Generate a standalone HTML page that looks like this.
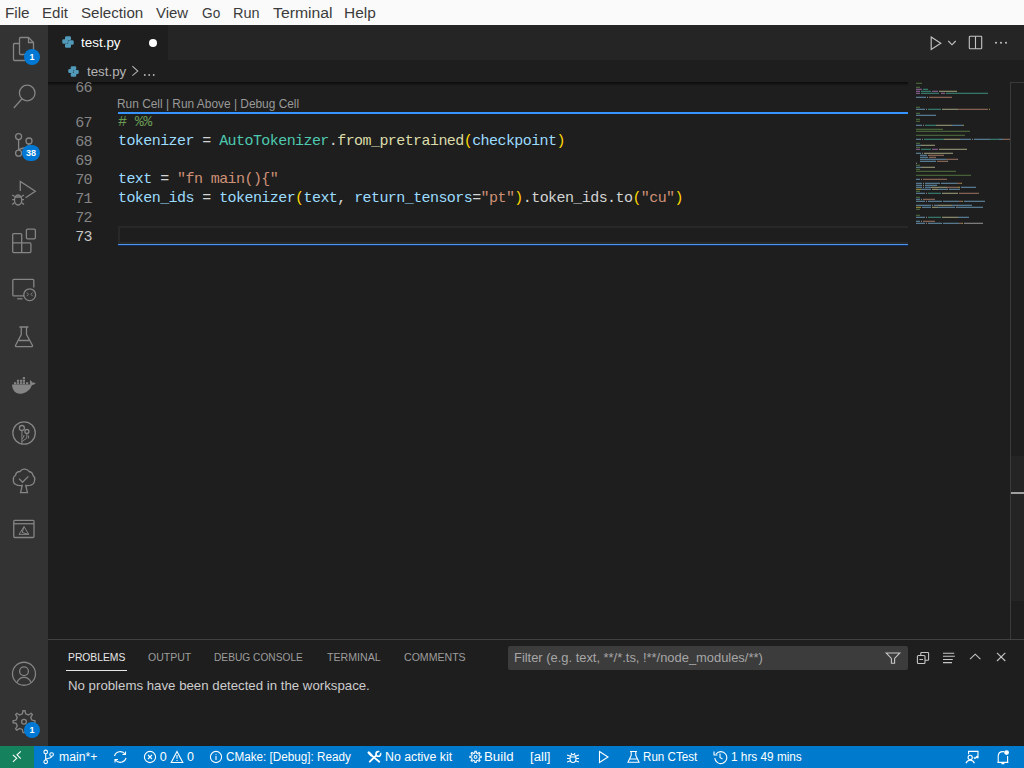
<!DOCTYPE html>
<html><head><meta charset="utf-8">
<style>
*{margin:0;padding:0;box-sizing:border-box}
html,body{width:1024px;height:768px;overflow:hidden;background:#1e1e1e;font-family:"Liberation Sans",sans-serif}
.a{position:absolute;white-space:nowrap}
svg.a{overflow:visible}
#menubar{left:0;top:0;width:1024px;height:25px;background:#fafafa;color:#3c3c3c;font-size:14px}
#menubar span{position:absolute;top:5px;line-height:17px}
#activity{left:0;top:25px;width:48px;height:721px;background:#333333}
#tabs{left:48px;top:25px;width:976px;height:35px;background:#252526}
#tab1{left:48px;top:25px;width:120px;height:35px;background:#1e1e1e}
#crumbs{left:48px;top:60px;width:976px;height:22px;background:#1e1e1e}
#editor{left:48px;top:82px;width:976px;height:557px;background:#1e1e1e}
#panel{left:48px;top:639px;width:976px;height:107px;background:#1e1e1e;border-top:1px solid #414141}
#status{left:0;top:746px;width:1024px;height:22px;background:#007acc;color:#fff;font-size:12px}
#remote{left:0;top:746px;width:34px;height:22px;background:#16825d}
.code{font-family:"Liberation Mono",monospace;font-size:15px;letter-spacing:-0.57px;line-height:19px;color:#d4d4d4}
.ln{color:#858585;text-align:right;width:50px;left:42px}
.v{color:#9cdcfe}.c{color:#4ec9b0}.f{color:#dcdcaa}.s{color:#ce9178}.m{color:#6a9955}.b{color:#ffd700}
.ic{stroke:#858585;fill:none;stroke-width:1.3}
.badge{background:#0078d4;color:#fff;font-size:9px;font-weight:bold;text-align:center;border-radius:8px;line-height:16px;height:16px}
.st{color:#fff;font-size:12px;top:749px;line-height:16px}
.si{stroke:#fff;fill:none;stroke-width:1.1}
.ptab{color:#9d9d9d;font-size:11px;top:651px;line-height:13px}
</style></head><body>
<div id="menubar" class="a"></div>
<div class="a" style="left:5.49px;top:5px;font-size:14px;line-height:17px;color:#3c3c3c;transform:scaleX(1.0905);transform-origin:0 0">File</div> <div class="a" style="left:42.17px;top:5px;font-size:14px;line-height:17px;color:#3c3c3c;transform:scaleX(1.0750);transform-origin:0 0">Edit</div> <div class="a" style="left:80.75px;top:5px;font-size:14px;line-height:17px;color:#3c3c3c;transform:scaleX(1.0807);transform-origin:0 0">Selection</div> <div class="a" style="left:156.00px;top:5px;font-size:14px;line-height:17px;color:#3c3c3c;transform:scaleX(1.0645);transform-origin:0 0">View</div> <div class="a" style="left:202.41px;top:5px;font-size:14px;line-height:17px;color:#3c3c3c;transform:scaleX(0.9778);transform-origin:0 0">Go</div> <div class="a" style="left:232.78px;top:5px;font-size:14px;line-height:17px;color:#3c3c3c;transform:scaleX(1.0360);transform-origin:0 0">Run</div> <div class="a" style="left:273.00px;top:5px;font-size:14px;line-height:17px;color:#3c3c3c;transform:scaleX(1.1269);transform-origin:0 0">Terminal</div> <div class="a" style="left:343.53px;top:5px;font-size:14px;line-height:17px;color:#3c3c3c;transform:scaleX(1.1036);transform-origin:0 0">Help</div>
<div id="activity" class="a"></div>
<div id="tabs" class="a"></div>
<div id="tab1" class="a"></div>
<div id="crumbs" class="a"></div>
<div id="editor" class="a"></div>
<div id="panel" class="a"></div>
<div id="status" class="a"></div>
<div id="remote" class="a"></div>

<!-- activity bar icons -->
<svg class="a" style="left:0;top:25px" width="48" height="721">
 <g class="ic">
  <!-- files -->
  <path d="M19.5 18.5 H14.5 Q13.5 18.5 13.5 19.5 V34.5 Q13.5 35.5 14.5 35.5 H25"/>
  <path d="M20.5 12.5 H28.5 L33.5 17.5 V29.5 M25 29.5 H20.5 Q19.5 29.5 19.5 28.5 V13.5 Q19.5 12.5 20.5 12.5 M28.5 12.5 V17.5 H33.5"/>
  <!-- search -->
  <circle cx="27.2" cy="68" r="7.8"/>
  <path d="M21.8 74 L13.8 83"/>
  <!-- source control -->
  <circle cx="18.6" cy="111.6" r="3"/>
  <circle cx="29" cy="116" r="3"/>
  <circle cx="18.6" cy="128.2" r="3"/>
  <path d="M18.6 114.6 V125.2 M29 119 Q29 122 24 123 Q19 124 18.6 125.2"/>
  <!-- debug -->
  <path d="M20.3 166 V156.5 L35.3 166.2 L25.6 172.7"/>
  <ellipse cx="18.1" cy="175" rx="3.6" ry="5"/>
  <path d="M15 172 H21.3 M12.2 170 L14.7 171.5 M24 170 L21.5 171.5 M12.2 174.7 H14.5 M21.7 174.7 H24 M12.2 179.5 L14.7 177.5 M24 179.5 L21.5 177.5"/>
  <!-- extensions -->
  <path d="M21.25 208.6 H13.7 Q12.7 208.6 12.7 209.6 V226.6 Q12.7 227.6 13.7 227.6 H29.9 Q30.9 227.6 30.9 226.6 V218.9 Q30.9 217.9 29.9 217.9 H21.7 V209.6 Q21.7 208.6 20.7 208.6 M12.7 217.9 H21.7 V227.6"/>
  <rect x="26.4" y="204.2" width="9" height="9.7" rx="1.3"/>
  <!-- remote explorer -->
  <path d="M24 270.9 H13.8 Q12.8 270.9 12.8 269.9 V255.4 Q12.8 254.4 13.8 254.4 H32.8 Q33.8 254.4 33.8 255.4 V262.5"/>
  <path d="M17.2 273.8 H22.5"/>
  <circle cx="29.7" cy="269.7" r="5.9"/>
  <path d="M26.8 267.5 L28.5 269.3 L26.8 271.1 M32.6 267.5 L30.9 269.3 L32.6 271.1" stroke-width="0.9"/>
  <!-- beaker -->
  <path d="M19.4 302 H28.4 M21.25 302 V309.6 L15.5 320.5 Q15.3 321.7 16.5 321.7 H31.6 Q32.8 321.7 32.5 320.5 L26.5 309.6 V302 M19 315.5 H28.75"/>
  <!-- gitlens -->
  <circle cx="24.06" cy="408" r="11.2"/>
  <circle cx="21.9" cy="403" r="2.5"/>
  <circle cx="26.9" cy="406.5" r="2"/>
  <path d="M21.9 405.5 V419 M26.9 408.5 V412 Q26.9 414 24 415 Q22 416 21.9 417 M24 410 Q24 413 22 414 M28.6 410.5 V413.5" stroke-width="1"/>
  <!-- tree -->
  <path d="M22.2 460.5 Q18 461 16 459.5 Q13 458.5 13.4 455 Q13 451.5 15.5 450.5 Q16 446.5 20 446.5 Q22 443.8 24.5 444.2 Q27.5 444 29 446.5 Q32.5 447 33 450.5 Q35.5 452.5 34.6 455.5 Q34 459.5 31 460 Q28.5 461 25.8 460.5 L27.4 467.6 H20.6 Z"/>
  <path d="M19 453.6 L22.5 457.3 L28.4 451.4"/>
  <!-- cmake -->
  <rect x="13.75" y="495.3" width="20.25" height="17.2" rx="1"/>
  <path d="M13.75 498.75 H34"/>
  <path d="M24 501.6 L19 509.4 H28.75 Z M24 501.6 L22.2 507.5 L28.75 509.4" stroke-width="1"/>
  <!-- account -->
  <circle cx="24" cy="648.75" r="11.5"/>
  <circle cx="24" cy="646.2" r="4.4"/>
  <path d="M16.9 657.5 Q19 652.3 24 652.3 Q29 652.3 31.1 657.5"/>
  <!-- gear -->
  <circle cx="24" cy="696.7" r="2.4"/>
 </g>
 <path class="ic" d="M22.32 688.88 L23.05 685.74 L24.95 685.74 L25.68 688.88 L28.34 689.98 L31.08 688.28 L32.42 689.62 L30.72 692.36 L31.82 695.02 L34.96 695.75 L34.96 697.65 L31.82 698.38 L30.72 701.04 L32.42 703.78 L31.08 705.12 L28.34 703.42 L25.68 704.52 L24.95 707.66 L23.05 707.66 L22.32 704.52 L19.66 703.42 L16.92 705.12 L15.58 703.78 L17.28 701.04 L16.18 698.38 L13.04 697.65 L13.04 695.75 L16.18 695.02 L17.28 692.36 L15.58 689.62 L16.92 688.28 L19.66 689.98 Z"/>
 <!-- docker (filled) -->
 <g fill="#858585">
  <path d="M12 359.6 H30.2 Q29.6 357.2 30 355 Q31.8 356 32.4 357.6 Q34.2 357.4 35.8 358.3 Q34.4 360 31.8 360.2 Q30.2 366.2 22.5 368.6 Q16 369.8 13.2 364.5 Q12 362.5 12 359.6 Z"/>
  <rect x="14" y="357.25" width="2.2" height="2.1"/><rect x="16.9" y="357.25" width="2.2" height="2.1"/><rect x="20" y="357.25" width="2.2" height="2.1"/><rect x="22.8" y="357.25" width="2.2" height="2.1"/><rect x="26" y="357.25" width="2.2" height="2.1"/>
  <rect x="16.9" y="354.75" width="2.2" height="2.1"/><rect x="20" y="354.75" width="2.2" height="2.1"/><rect x="22.8" y="354.75" width="2.2" height="2.1"/>
  <rect x="22.8" y="352.1" width="2.2" height="2.1"/>
 </g>
</svg>
<div class="a badge" style="left:24px;top:48.6px;width:16px">1</div>
<div class="a badge" style="left:22px;top:144.5px;width:18px">38</div>
<div class="a badge" style="left:24px;top:722px;width:16px">1</div>

<!-- tab -->
<svg class="a" style="left:62px;top:36px" width="12" height="12" viewBox="0 0 12 12"><g fill="#519aba"><rect x="3" y="0.3" width="6" height="4" rx="1.3"/><rect x="0.3" y="3.3" width="5.6" height="4.4" rx="1.3"/><rect x="3" y="3" width="2.9" height="1.3"/><rect x="6.1" y="4.3" width="5.6" height="4.4" rx="1.3"/><rect x="3" y="7.7" width="6" height="4" rx="1.3"/><rect x="6.1" y="7.7" width="2.9" height="1.3"/></g></svg>
<div class="a" style="left:80.61px;top:34px;font-size:13px;line-height:17px;color:#ffffff;transform:scaleX(1.0333);transform-origin:0 0">test.py</div>
<div class="a" style="left:149px;top:39px;width:8px;height:8px;border-radius:4px;background:#fff"></div>
<!-- editor actions -->
<svg class="a" style="left:920px;top:30px" width="100" height="25">
 <g stroke="#c5c5c5" fill="none" stroke-width="1.1">
  <path d="M11.2 7 L20.8 13.2 L11.2 19.5 Z"/>
  <path d="M28.3 11 L32 14.8 L35.7 11"/>
  <rect x="49.3" y="6.3" width="12.4" height="12.4" rx="0.8"/>
  <path d="M55.5 6.3 V18.7"/>
 </g>
 <g fill="#c5c5c5"><circle cx="76" cy="12.8" r="1"/><circle cx="81" cy="12.8" r="1"/><circle cx="86" cy="12.8" r="1"/></g>
</svg>
<!-- breadcrumbs -->
<svg class="a" style="left:68px;top:65.5px" width="11" height="11" viewBox="0 0 12 12"><g fill="#519aba"><rect x="3" y="0.3" width="6" height="4" rx="1.3"/><rect x="0.3" y="3.3" width="5.6" height="4.4" rx="1.3"/><rect x="3" y="3" width="2.9" height="1.3"/><rect x="6.1" y="4.3" width="5.6" height="4.4" rx="1.3"/><rect x="3" y="7.7" width="6" height="4" rx="1.3"/><rect x="6.1" y="7.7" width="2.9" height="1.3"/></g></svg>
<div class="a" style="left:86.81px;top:63px;font-size:13px;line-height:17px;color:#b4b4b4;transform:scaleX(1.0256);transform-origin:0 0">test.py</div>
<svg class="a" style="left:130px;top:64px" width="30" height="16">
 <path d="M2.35 2.1 L7.8 7.05 L2.35 11.7" stroke="#b4b4b4" fill="none" stroke-width="1.1"/>
 <g fill="#b4b4b4"><circle cx="14.8" cy="11" r="0.95"/><circle cx="19.2" cy="11" r="0.95"/><circle cx="23.7" cy="11" r="0.95"/></g>
</svg>
<!-- scroll shadow -->
<div class="a" style="left:48px;top:82px;width:860px;height:4px;background:linear-gradient(#000000a0,#0000)"></div>

<!-- code -->
<div class="a code ln" style="top:79px">66</div>
<div class="a" style="left:117.01px;top:97px;font-size:12px;line-height:15px;color:#999999;transform:scaleX(0.9918);transform-origin:0 0">Run Cell | Run Above | Debug Cell</div>
<div class="a" style="left:118px;top:112px;width:790px;height:2px;background:#3794ff"></div>
<div class="a code ln" style="top:114px">67</div>
<div class="a code ln" style="top:133px">68</div>
<div class="a code ln" style="top:152px">69</div>
<div class="a code ln" style="top:171px">70</div>
<div class="a code ln" style="top:190px">71</div>
<div class="a code ln" style="top:209px">72</div>
<div class="a code ln" style="top:228px;color:#c6c6c6">73</div>
<div class="a code" style="left:118px;top:113px"><span class="m"># %%</span></div>
<div class="a code" style="left:118px;top:132px"><span class="v">tokenizer</span> = <span class="c">AutoTokenizer</span>.<span class="f">from_pretrained</span><span class="b">(</span><span class="v">checkpoint</span><span class="b">)</span></div>
<div class="a code" style="left:118px;top:170px"><span class="v">text</span> = <span class="s">"fn main(){"</span></div>
<div class="a code" style="left:118px;top:189px"><span class="v">token_ids</span> = <span class="v">tokenizer</span><span class="b">(</span><span class="v">text</span>, <span class="v">return_tensors</span>=<span class="s">"pt"</span><span class="b">)</span>.token_ids.to<span class="b">(</span><span class="s">"cu"</span><span class="b">)</span></div>
<div class="a" style="left:118px;top:226px;width:790px;height:18px;border:2px solid #282828;border-right:none"></div>
<div class="a" style="left:118px;top:244px;width:790px;height:1px;background:#4f94e6"></div>
<div class="a" style="left:118px;top:245px;width:790px;height:1px;background:#0f2d60"></div>
<svg class="a" style="left:916px;top:82px;opacity:0.68" width="94" height="150"><rect x="0" y="0.7" width="6" height="1.3" fill="#5a8248"/><rect x="0" y="4.7" width="4" height="1.3" fill="#5a8248"/><rect x="0" y="6.7" width="6" height="1.3" fill="#a874b0"/><rect x="7" y="6.7" width="5" height="1.3" fill="#3f9f8c"/><rect x="0" y="8.7" width="4" height="1.3" fill="#a874b0"/><rect x="5" y="8.7" width="10" height="1.3" fill="#3f9f8c"/><rect x="16" y="8.7" width="6" height="1.3" fill="#a874b0"/><rect x="23" y="8.7" width="18" height="1.3" fill="#b7b78f"/><rect x="0" y="10.7" width="4" height="1.3" fill="#a874b0"/><rect x="5" y="10.7" width="18" height="1.3" fill="#3f9f8c"/><rect x="25" y="10.7" width="4" height="1.3" fill="#a874b0"/><rect x="30" y="10.7" width="42" height="1.3" fill="#3f9f8c"/><rect x="0" y="14.7" width="10" height="1.3" fill="#6fa3c4"/><rect x="11" y="14.7" width="1" height="1.3" fill="#a8a8a8"/><rect x="13" y="14.7" width="23" height="1.3" fill="#b0826a"/><rect x="0" y="24.7" width="4" height="1.3" fill="#5a8248"/><rect x="0" y="26.7" width="9" height="1.3" fill="#6fa3c4"/><rect x="10" y="26.7" width="1" height="1.3" fill="#a8a8a8"/><rect x="12" y="26.7" width="13" height="1.3" fill="#3f9f8c"/><rect x="26" y="26.7" width="16" height="1.3" fill="#b7b78f"/><rect x="42" y="26.7" width="30" height="1.3" fill="#b0826a"/><rect x="73" y="26.7" width="1" height="1.3" fill="#c8b04a"/><rect x="0" y="30.7" width="4" height="1.3" fill="#5a8248"/><rect x="0" y="32.7" width="20" height="1.3" fill="#6fa3c4"/><rect x="0" y="36.7" width="4" height="1.3" fill="#5a8248"/><rect x="0" y="38.7" width="4" height="1.3" fill="#5a8248"/><rect x="0" y="42.7" width="6" height="1.3" fill="#6fa3c4"/><rect x="7" y="42.7" width="1" height="1.3" fill="#a8a8a8"/><rect x="9" y="42.7" width="11" height="1.3" fill="#3f9f8c"/><rect x="20" y="42.7" width="16" height="1.3" fill="#b7b78f"/><rect x="36" y="42.7" width="11" height="1.3" fill="#6fa3c4"/><rect x="47" y="42.7" width="1" height="1.3" fill="#c8b04a"/><rect x="0" y="46.7" width="27" height="1.3" fill="#5a8248"/><rect x="0" y="48.7" width="54" height="1.3" fill="#5a8248"/><rect x="0" y="52.7" width="49" height="1.3" fill="#5a8248"/><rect x="0" y="56.7" width="5" height="1.3" fill="#6fa3c4"/><rect x="6" y="56.7" width="1" height="1.3" fill="#a8a8a8"/><rect x="8" y="56.7" width="20" height="1.3" fill="#3f9f8c"/><rect x="28" y="56.7" width="16" height="1.3" fill="#b7b78f"/><rect x="44" y="56.7" width="11" height="1.3" fill="#6fa3c4"/><rect x="56" y="56.7" width="1" height="1.3" fill="#a8a8a8"/><rect x="58" y="56.7" width="16" height="1.3" fill="#6fa3c4"/><rect x="74" y="56.7" width="9" height="1.3" fill="#3f9f8c"/><rect x="83" y="56.7" width="4" height="1.3" fill="#6fa3c4"/><rect x="87" y="56.7" width="7" height="1.3" fill="#b0826a"/><rect x="0" y="60.7" width="4" height="1.3" fill="#5a8248"/><rect x="0" y="62.7" width="5" height="1.3" fill="#6fa3c4"/><rect x="5" y="62.7" width="14" height="1.3" fill="#b7b78f"/><rect x="0" y="64.7" width="4" height="1.3" fill="#5a8248"/><rect x="0" y="66.7" width="4" height="1.3" fill="#a874b0"/><rect x="5" y="66.7" width="10" height="1.3" fill="#3f9f8c"/><rect x="16" y="66.7" width="6" height="1.3" fill="#a874b0"/><rect x="23" y="66.7" width="28" height="1.3" fill="#b7b78f"/><rect x="0" y="70.7" width="5" height="1.3" fill="#6fa3c4"/><rect x="6" y="70.7" width="1" height="1.3" fill="#a8a8a8"/><rect x="8" y="70.7" width="29" height="1.3" fill="#b7b78f"/><rect x="4" y="72.7" width="7" height="1.3" fill="#6fa3c4"/><rect x="12" y="72.7" width="16" height="1.3" fill="#b0826a"/><rect x="4" y="74.7" width="8" height="1.3" fill="#6fa3c4"/><rect x="13" y="74.7" width="7" height="1.3" fill="#b0826a"/><rect x="4" y="76.7" width="16" height="1.3" fill="#6fa3c4"/><rect x="20" y="76.7" width="10" height="1.3" fill="#6fa3c4"/><rect x="30" y="76.7" width="11" height="1.3" fill="#b0826a"/><rect x="41" y="76.7" width="1" height="1.3" fill="#a8a8a8"/><rect x="4" y="78.7" width="16" height="1.3" fill="#6fa3c4"/><rect x="21" y="78.7" width="10" height="1.3" fill="#b0826a"/><rect x="31" y="78.7" width="1" height="1.3" fill="#a8a8a8"/><rect x="0" y="80.7" width="1" height="1.3" fill="#a8a8a8"/><rect x="0" y="82.7" width="4" height="1.3" fill="#5a8248"/><rect x="0" y="84.7" width="5" height="1.3" fill="#6fa3c4"/><rect x="5" y="84.7" width="1" height="1.3" fill="#a8a8a8"/><rect x="6" y="84.7" width="13" height="1.3" fill="#b7b78f"/><rect x="0" y="86.7" width="4" height="1.3" fill="#5a8248"/><rect x="0" y="88.7" width="40" height="1.3" fill="#5a8248"/><rect x="0" y="92.7" width="55" height="1.3" fill="#5a8248"/><rect x="0" y="96.7" width="4" height="1.3" fill="#6fa3c4"/><rect x="5" y="96.7" width="1" height="1.3" fill="#a8a8a8"/><rect x="7" y="96.7" width="24" height="1.3" fill="#b0826a"/><rect x="0" y="100.7" width="6" height="1.3" fill="#6fa3c4"/><rect x="7" y="100.7" width="1" height="1.3" fill="#a8a8a8"/><rect x="9" y="100.7" width="15" height="1.3" fill="#6fa3c4"/><rect x="25" y="100.7" width="16" height="1.3" fill="#6fa3c4"/><rect x="41" y="100.7" width="4" height="1.3" fill="#b0826a"/><rect x="45" y="100.7" width="1" height="1.3" fill="#c8b04a"/><rect x="0" y="102.7" width="6" height="1.3" fill="#6fa3c4"/><rect x="7" y="102.7" width="1" height="1.3" fill="#a8a8a8"/><rect x="9" y="102.7" width="12" height="1.3" fill="#6fa3c4"/><rect x="0" y="104.7" width="6" height="1.3" fill="#6fa3c4"/><rect x="7" y="104.7" width="1" height="1.3" fill="#a8a8a8"/><rect x="9" y="104.7" width="6" height="1.3" fill="#6fa3c4"/><rect x="15" y="104.7" width="16" height="1.3" fill="#b7b78f"/><rect x="31" y="104.7" width="11" height="1.3" fill="#b0826a"/><rect x="42" y="104.7" width="2" height="1.3" fill="#c8b04a"/><rect x="45" y="104.7" width="15" height="1.3" fill="#6fa3c4"/><rect x="0" y="106.7" width="5" height="1.3" fill="#c8b04a"/><rect x="5" y="106.7" width="10" height="1.3" fill="#6fa3c4"/><rect x="16" y="106.7" width="6" height="1.3" fill="#b7b78f"/><rect x="22" y="106.7" width="9" height="1.3" fill="#6fa3c4"/><rect x="31" y="106.7" width="1" height="1.3" fill="#a8a8a8"/><rect x="33" y="106.7" width="11" height="1.3" fill="#6fa3c4"/><rect x="0" y="108.7" width="4" height="1.3" fill="#5a8248"/><rect x="0" y="110.7" width="9" height="1.3" fill="#6fa3c4"/><rect x="10" y="110.7" width="1" height="1.3" fill="#a8a8a8"/><rect x="12" y="110.7" width="13" height="1.3" fill="#3f9f8c"/><rect x="26" y="110.7" width="16" height="1.3" fill="#b7b78f"/><rect x="43" y="110.7" width="20" height="1.3" fill="#b0826a"/><rect x="0" y="114.7" width="4" height="1.3" fill="#5a8248"/><rect x="0" y="116.7" width="4" height="1.3" fill="#6fa3c4"/><rect x="5" y="116.7" width="1" height="1.3" fill="#a8a8a8"/><rect x="7" y="116.7" width="12" height="1.3" fill="#b0826a"/><rect x="0" y="118.7" width="9" height="1.3" fill="#6fa3c4"/><rect x="10" y="118.7" width="1" height="1.3" fill="#a8a8a8"/><rect x="12" y="118.7" width="14" height="1.3" fill="#6fa3c4"/><rect x="27" y="118.7" width="16" height="1.3" fill="#6fa3c4"/><rect x="43" y="118.7" width="3" height="1.3" fill="#b0826a"/><rect x="46" y="118.7" width="1" height="1.3" fill="#c8b04a"/><rect x="48" y="118.7" width="21" height="1.3" fill="#6fa3c4"/><rect x="0" y="122.7" width="15" height="1.3" fill="#6fa3c4"/><rect x="16" y="122.7" width="1" height="1.3" fill="#a8a8a8"/><rect x="18" y="122.7" width="4" height="1.3" fill="#6fa3c4"/><rect x="22" y="122.7" width="14" height="1.3" fill="#b7b78f"/><rect x="36" y="122.7" width="5" height="1.3" fill="#6fa3c4"/><rect x="41" y="122.7" width="1" height="1.3" fill="#a8a8a8"/><rect x="42" y="122.7" width="14" height="1.3" fill="#6fa3c4"/><rect x="0" y="124.7" width="5" height="1.3" fill="#c8b04a"/><rect x="6" y="124.7" width="9" height="1.3" fill="#6fa3c4"/><rect x="16" y="124.7" width="6" height="1.3" fill="#b7b78f"/><rect x="22" y="124.7" width="17" height="1.3" fill="#6fa3c4"/><rect x="40" y="124.7" width="1" height="1.3" fill="#a8a8a8"/><rect x="41" y="124.7" width="20" height="1.3" fill="#6fa3c4"/><rect x="61" y="124.7" width="6" height="1.3" fill="#6fa3c4"/><rect x="0" y="126.7" width="4" height="1.3" fill="#5a8248"/><rect x="0" y="132.7" width="4" height="1.3" fill="#5a8248"/><rect x="0" y="134.7" width="9" height="1.3" fill="#6fa3c4"/><rect x="10" y="134.7" width="1" height="1.3" fill="#a8a8a8"/><rect x="12" y="134.7" width="13" height="1.3" fill="#3f9f8c"/><rect x="26" y="134.7" width="16" height="1.3" fill="#b7b78f"/><rect x="42" y="134.7" width="11" height="1.3" fill="#6fa3c4"/><rect x="0" y="138.7" width="4" height="1.3" fill="#6fa3c4"/><rect x="5" y="138.7" width="1" height="1.3" fill="#a8a8a8"/><rect x="7" y="138.7" width="12" height="1.3" fill="#b0826a"/><rect x="0" y="140.7" width="9" height="1.3" fill="#6fa3c4"/><rect x="10" y="140.7" width="1" height="1.3" fill="#a8a8a8"/><rect x="12" y="140.7" width="14" height="1.3" fill="#6fa3c4"/><rect x="27" y="140.7" width="16" height="1.3" fill="#6fa3c4"/><rect x="43" y="140.7" width="3" height="1.3" fill="#b0826a"/><rect x="46" y="140.7" width="1" height="1.3" fill="#c8b04a"/><rect x="48" y="140.7" width="19" height="1.3" fill="#a8a8a8"/></svg>
<!-- scrollbar -->
<div class="a" style="left:1010px;top:82px;width:1px;height:557px;background:#3a3a3a"></div>
<div class="a" style="left:1010px;top:82px;width:14px;height:1px;background:#3a3a3a"></div>
<div class="a" style="left:1011px;top:456px;width:13px;height:145px;background:#242424"></div>
<div class="a" style="left:1011px;top:492px;width:13px;height:2px;background:#a0a0a0"></div>

<!-- panel -->
<div class="a" style="left:67.64px;top:651px;font-size:11px;line-height:13px;color:#e7e7e7;transform:scaleX(0.9383);transform-origin:0 0">PROBLEMS</div>
<div class="a" style="left:66px;top:670px;width:61px;height:1px;background:#e7e7e7"></div>
<div class="a" style="left:148.02px;top:651px;font-size:11px;line-height:13px;color:#9d9d9d;transform:scaleX(0.9556);transform-origin:0 0">OUTPUT</div> <div class="a" style="left:214.07px;top:651px;font-size:11px;line-height:13px;color:#9d9d9d;transform:scaleX(0.9263);transform-origin:0 0">DEBUG CONSOLE</div> <div class="a" style="left:327.02px;top:651px;font-size:11px;line-height:13px;color:#9d9d9d;transform:scaleX(0.9636);transform-origin:0 0">TERMINAL</div> <div class="a" style="left:404.00px;top:651px;font-size:11px;line-height:13px;color:#9d9d9d;transform:scaleX(0.9609);transform-origin:0 0">COMMENTS</div>
<div class="a" style="left:508px;top:646px;width:400px;height:24px;background:#3c3c3c;border-radius:2px"></div>
<div class="a" style="left:514.01px;top:650px;font-size:13px;line-height:15px;color:#a6a6a6;transform:scaleX(0.9920);transform-origin:0 0">Filter (e.g. text, **/*.ts, !**/node_modules/**)</div>
<svg class="a" style="left:880px;top:646px" width="140" height="24">
 <g stroke="#c5c5c5" fill="none" stroke-width="1.1">
  <path d="M6.2 7 H19.8 L14.6 12.4 V17.3 H11.4 V12.4 Z"/>
  <rect x="37.4" y="9.5" width="7.6" height="8" rx="1"/><path d="M40.8 9.5 V7.2 Q40.8 6.5 41.5 6.5 H47.9 Q48.6 6.5 48.6 7.2 V13.6 Q48.6 14.3 47.9 14.3 H45 M39.4 13.5 H43"/>
  <path d="M63 7.2 H74.2 M63 10.2 H74.8 M63 13.5 H72.8 M63 16.6 H72"/>
  <path d="M90 13.2 L95.2 8.2 L100.4 13.2"/>
  <path d="M117 6.8 L125.3 15 M125.3 6.8 L117 15"/>
 </g>
</svg>
<div class="a" style="left:67.99px;top:678px;font-size:13px;line-height:16px;color:#cccccc;transform:scaleX(1.0186);transform-origin:0 0">No problems have been detected in the workspace.</div>

<!-- status bar -->
<svg class="a" style="left:0;top:746px" width="1024" height="22">
 <g class="si">
  <path d="M12.9 8.8 L16.7 12.3 L12.9 15.8 M20.8 5.3 L17 8.8 L20.8 12.6"/>
  <circle cx="45.7" cy="5.9" r="1.8"/><circle cx="45.7" cy="15.8" r="1.8"/><circle cx="51.6" cy="8.5" r="1.8"/>
  <path d="M45.7 7.7 V14 M51.6 10.3 Q51.6 12 48 12.5 Q45.7 13 45.7 14"/>
  <path d="M114.5 10 A6 6 0 0 1 125 8 M126 12 A6 6 0 0 1 115.5 14 M125.5 5.5 V8.5 H122.5 M115 16.5 V13.5 H118"/>
  <circle cx="150" cy="11" r="5.6"/><path d="M148 9 L152 13 M152 9 L148 13"/>
  <path d="M177 5.5 L182.8 16.5 H171.2 Z M177 9 V12.8 M177 14 V15"/>
  <circle cx="216" cy="11" r="5.6"/><path d="M216 10 V14 M216 8 V8.8"/>
  <path d="M369.8 15.6 L376.2 9.4" stroke-width="1.9" stroke-linecap="round"/><circle cx="378.3" cy="7.9" r="2.3" stroke-width="1.6"/><path d="M378.3 7.9 L381.5 4.7" stroke="#007acc" stroke-width="1.8"/><path d="M368.8 6.7 L371.2 9.1" stroke-width="2.6" stroke-linecap="round"/><path d="M371.2 9.1 L379.3 15.8" stroke-width="1.8" stroke-linecap="round"/>
  <circle cx="475.55" cy="10.9" r="1.4"/><path d="M474.68 7.00 L474.88 5.24 L476.22 5.24 L476.42 7.00 L477.69 7.52 L479.08 6.42 L480.03 7.37 L478.93 8.76 L479.45 10.03 L481.21 10.23 L481.21 11.57 L479.45 11.77 L478.93 13.04 L480.03 14.43 L479.08 15.38 L477.69 14.28 L476.42 14.80 L476.22 16.56 L474.88 16.56 L474.68 14.80 L473.41 14.28 L472.02 15.38 L471.07 14.43 L472.17 13.04 L471.65 11.77 L469.89 11.57 L469.89 10.23 L471.65 10.03 L472.17 8.76 L471.07 7.37 L472.02 6.42 L473.41 7.52 Z"/>
  <ellipse cx="573" cy="12.5" rx="3" ry="4"/><path d="M570 11 H576 M567 9 L570 10 M579 9 L576 10 M567 12.5 H570 M576 12.5 H579 M567 16 L570 15 M579 16 L576 15 M571 7 L572 8.5 M575 7 L574 8.5"/>
  <path d="M599.5 5.5 L608 11 L599.5 16.5 Z"/>
  <path d="M630 5.5 H637 M631.2 5.5 V9.5 L628 16.2 H639 L635.8 9.5 V5.5 M629.5 13 H637.5"/>
  <path d="M716 8 A6 6 0 1 1 714.8 12 M714 5.5 V9 H717.5 M720 7.5 V11.5 L722.5 13"/>
  <path d="M968.6 8.3 V5.4 H978 V11.6 H976.6 M973.8 11.4 L974.9 12.5 L977.4 10"/><circle cx="970.2" cy="11.4" r="2.1"/><path d="M966 17.2 Q967 14.3 970.2 14.3 Q973.4 14.3 974.4 17.2"/>
  <path d="M998.2 16.2 V10.5 Q998.2 5.6 1003 5.6 Q1003.8 5.6 1004.4 5.8 M1007.6 10 V16.2 M997.4 16.4 H1008.4 M1001.4 17.6 H1004.4"/>
 </g>
 <circle cx="1006.6" cy="6.6" r="2.4" fill="#fff"/>
</svg>
<div class="a" style="left:59.00px;top:749px;font-size:12.5px;line-height:16px;color:#ffffff;transform:scaleX(0.9744);transform-origin:0 0">main*+</div> <div class="a" style="left:159.80px;top:749px;font-size:12.5px;line-height:16px;color:#ffffff">0</div> <div class="a" style="left:187.00px;top:749px;font-size:12.5px;line-height:16px;color:#ffffff">0</div> <div class="a" style="left:226.00px;top:749px;font-size:12.5px;line-height:16px;color:#ffffff;transform:scaleX(0.9366);transform-origin:0 0">CMake: [Debug]: Ready</div> <div class="a" style="left:384.61px;top:749px;font-size:12.5px;line-height:16px;color:#ffffff;transform:scaleX(0.9853);transform-origin:0 0">No active kit</div> <div class="a" style="left:483.94px;top:749px;font-size:12.5px;line-height:16px;color:#ffffff;transform:scaleX(1.0615);transform-origin:0 0">Build</div> <div class="a" style="left:529.59px;top:749px;font-size:12.5px;line-height:16px;color:#ffffff;transform:scaleX(1.0526);transform-origin:0 0">[all]</div> <div class="a" style="left:642.61px;top:749px;font-size:12.5px;line-height:16px;color:#ffffff;transform:scaleX(0.9288);transform-origin:0 0">Run CTest</div> <div class="a" style="left:731.03px;top:749px;font-size:12.5px;line-height:16px;color:#ffffff;transform:scaleX(0.9432);transform-origin:0 0">1 hrs 49 mins</div>
</body></html>
